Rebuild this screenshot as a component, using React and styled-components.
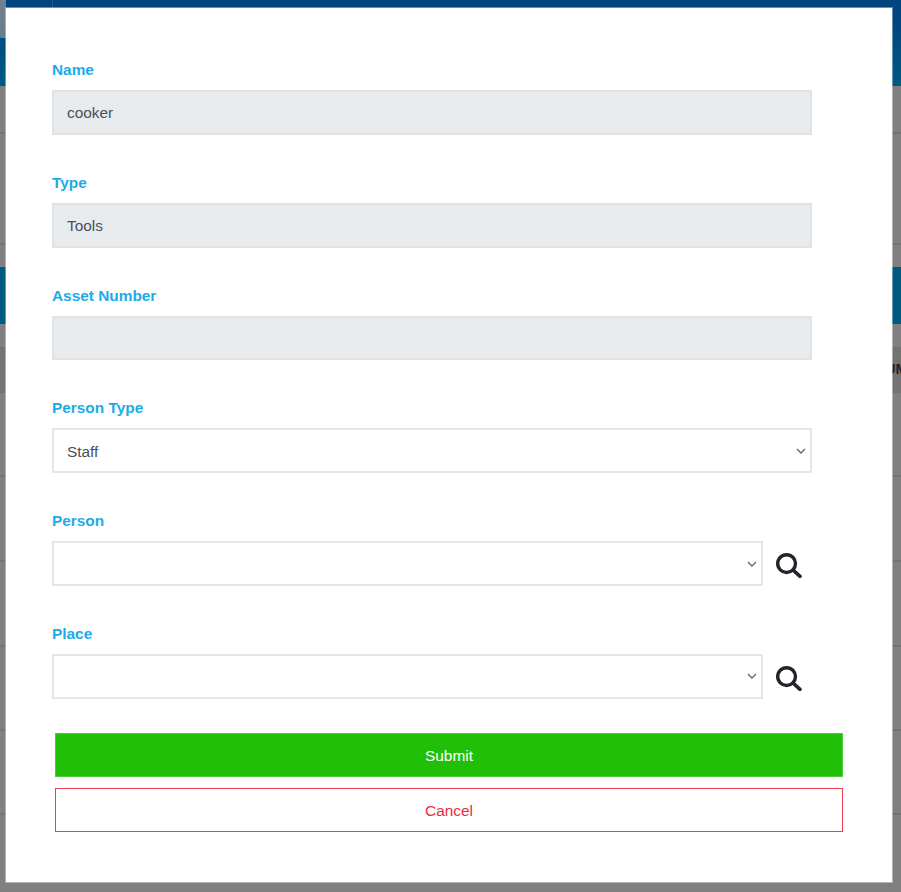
import React from 'react';
import styled, { createGlobalStyle } from 'styled-components';

const GlobalStyle = createGlobalStyle`
    html,
    body {
        margin: 0;
        padding: 0;
        background: #808080;
    }

    body {
        font-family: 'Liberation Sans', Arial, sans-serif;
    }
`;

const TOP_ROWS = [48, 111];
const BOTTOM_ROWS = [84, 85, 85, 84, 84];

const Chevron = () => (
    <ChevronIcon viewBox="0 0 10 6" aria-hidden="true">
        <path d="M1 1l4 4 4-4" fill="none" stroke="currentColor" strokeWidth="1.4" />
    </ChevronIcon>
);

const SearchIcon = () => (
    <svg width="26" height="25" viewBox="0 0 26 25" aria-hidden="true">
        <circle cx="10.6" cy="10.6" r="8.9" fill="none" stroke="currentColor" strokeWidth="3.4" />
        <path d="M17 17l7 6.4" fill="none" stroke="currentColor" strokeWidth="3.6" strokeLinecap="round" />
    </svg>
);

const PickField = ({ label, children }) => (
    <Field>
        <Label>{label}</Label>
        <SelectRow>
            <SelectWrap>
                <Select defaultValue="">{children}</Select>
                <Chevron />
            </SelectWrap>
            <SearchButton type="button" aria-label={`Search ${label}`}>
                <SearchIcon />
            </SearchButton>
        </SelectRow>
    </Field>
);

const App = () => {
    return (
        <>
            <GlobalStyle />
            <Page>
                <Backdrop>
                    <TopBar />
                    <Rows>
                        {TOP_ROWS.map((h) => (
                            <Row key={h} $height={h} />
                        ))}
                    </Rows>
                    <Band />
                    <TableHead>
                        <HeadText>UM</HeadText>
                    </TableHead>
                    <Rows>
                        {BOTTOM_ROWS.map((h, i) => (
                            <Row key={i} $height={h} />
                        ))}
                    </Rows>
                </Backdrop>

                <Modal>
                    <Form onSubmit={(ev) => ev.preventDefault()}>
                        <Field>
                            <Label>Name</Label>
                            <Input value="cooker" disabled readOnly />
                        </Field>
                        <Field>
                            <Label>Type</Label>
                            <Input value="Tools" disabled readOnly />
                        </Field>
                        <Field>
                            <Label>Asset Number</Label>
                            <Input value="" disabled readOnly />
                        </Field>
                        <Field>
                            <Label>Person Type</Label>
                            <SelectWrap>
                                <Select defaultValue="staff">
                                    <option value="staff">Staff</option>
                                </Select>
                                <Chevron />
                            </SelectWrap>
                        </Field>
                        <PickField label="Person">
                            <option value=""></option>
                        </PickField>
                        <PickField label="Place">
                            <option value=""></option>
                        </PickField>
                        <Actions>
                            <SubmitButton type="submit">Submit</SubmitButton>
                            <CancelButton type="button">Cancel</CancelButton>
                        </Actions>
                    </Form>
                </Modal>
            </Page>
        </>
    );
};

const Page = styled.div`
    width: 901px;
    height: 892px;
    position: relative;
    overflow: hidden;
`;

const Backdrop = styled.div`
    height: 100%;
    display: flex;
    flex-direction: column;
    background: #808080;
`;

const TopBar = styled.div`
    height: 86px;
    flex: none;
    position: relative;
    background: linear-gradient(180deg, #004480 0%, #004480 15%, #005a80 100%);

    /* avatar peeking out left of the modal */
    &::before {
        content: '';
        position: absolute;
        left: 0;
        top: 0;
        width: 6px;
        height: 38px;
        background: linear-gradient(180deg, #6f7f8c 0%, #6f7f8c 55%, #5f7f92 100%);
    }

    &::after {
        content: '';
        position: absolute;
        left: 52px;
        top: 0;
        width: 1px;
        height: 8px;
        background: #1f5a8f;
    }
`;

const Rows = styled.div`
    display: flex;
    flex-direction: column;
    flex: none;
`;

const Row = styled.div`
    height: ${(p) => p.$height}px;
    box-sizing: border-box;
    border-bottom: 2px solid #747474;
`;

const Band = styled.div`
    height: 57px;
    margin-top: 22px;
    flex: none;
    background: #005a80;
`;

const TableHead = styled.div`
    height: 46px;
    margin-top: 23px;
    flex: none;
    background: #737373;
    display: flex;
    align-items: center;
    justify-content: flex-end;
    overflow: hidden;
`;

const HeadText = styled.span`
    font-size: 15px;
    font-weight: 700;
    color: #222;
    margin: 0 -7px 3px 0;
`;

const Modal = styled.div`
    position: absolute;
    left: 6px;
    top: 8px;
    width: 886px;
    height: 874px;
    box-sizing: border-box;
    background: #fff;
    box-shadow: 0 0 0 1px rgba(255, 255, 255, 0.4);
    padding: 52px 49px 0 46px;
`;

const Form = styled.form`
    display: flex;
    flex-direction: column;
    gap: 38px;
`;

const Field = styled.div`
    display: flex;
    flex-direction: column;
    gap: 10px;
    width: 760px;
`;

const Label = styled.label`
    font-size: 15.4px;
    font-weight: 700;
    line-height: 20px;
    color: #1cabe9;
`;

const Input = styled.input`
    width: 100%;
    height: 44.8px;
    box-sizing: border-box;
    padding: 2px 13px 0;
    font-family: inherit;
    font-size: 15.4px;
    color: #495057;
    background: #e8ebee;
    border: 2px solid #e0e2e4;
    border-radius: 0;
    outline: none;
    opacity: 1;
`;

const SelectWrap = styled.div`
    flex: 1;
    min-width: 0;
    position: relative;
    display: flex;
    color: #666;
`;

const Select = styled.select`
    width: 100%;
    height: 44.8px;
    box-sizing: border-box;
    padding: 1px 13px 0;
    appearance: none;
    font-family: inherit;
    font-size: 15.4px;
    color: #495057;
    background: #fff;
    border: 2px solid #e6e6e6;
    border-radius: 0;
    outline: none;
`;

const ChevronIcon = styled.svg`
    position: absolute;
    right: 6px;
    top: 50%;
    width: 10px;
    height: 6px;
    margin-top: -3px;
    pointer-events: none;
`;

const SelectRow = styled.div`
    display: flex;
    align-items: center;
`;

const SearchButton = styled.button`
    flex: none;
    width: 49px;
    height: 44px;
    padding: 4px 0 0 2px;
    display: flex;
    align-items: center;
    justify-content: center;
    border: none;
    background: transparent;
    color: #212529;
`;

const Actions = styled.div`
    display: flex;
    flex-direction: column;
    gap: 11px;
    margin: -4px 0 0 3px;
    width: 788px;
`;

const ActionButton = styled.button`
    height: 44px;
    box-sizing: border-box;
    font-family: inherit;
    font-size: 15.4px;
    border-radius: 0;
    padding-top: 4px;
`;

const SubmitButton = styled(ActionButton)`
    background: #22bf08;
    border: 1px solid #4fcc3a;
    color: #fff;
    font-weight: 400;
`;

const CancelButton = styled(ActionButton)`
    background: #fff;
    border: 1.5px solid #ee3f52;
    color: #ee2b3d;
    font-weight: 400;
`;

export default App;
